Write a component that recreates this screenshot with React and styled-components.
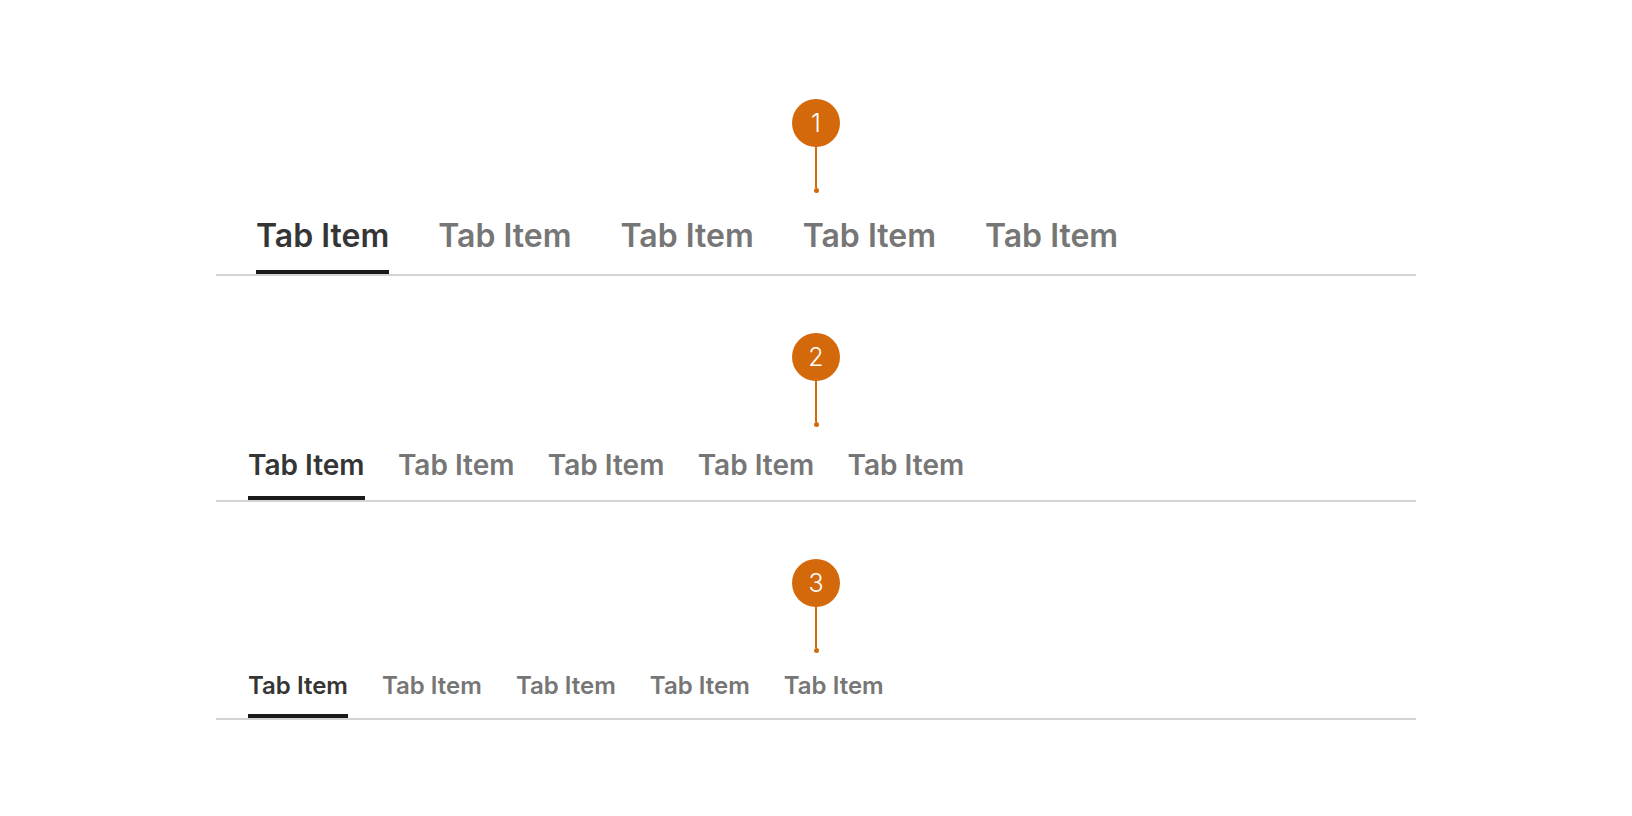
import styled, { createGlobalStyle } from "styled-components"

const GlobalStyle = createGlobalStyle`
  body {
    margin: 0;
    background: #ffffff;
    font-family: Inter, "Noto Sans", sans-serif;
  }
`

const sizes = {
  lg: { font: 32, line: 40, pad: 14, gap: 49, inset: 40, drop: 23 },
  md: { font: 28, line: 36, pad: 13, gap: 33.3, inset: 32, drop: 20 },
  sm: { font: 24, line: 32, pad: 12, gap: 34, inset: 32, drop: 17 },
}

const Page = styled.div`
  display: flex;
  flex-direction: column;
  align-items: center;
  padding-top: 99px;
  gap: 57px;
`

const Section = styled.section`
  display: flex;
  flex-direction: column;
  align-items: center;
  width: 1200px;
`

const Marker = styled.div`
  display: flex;
  flex-direction: column;
  align-items: center;
  margin-bottom: ${p => p.$drop}px;
`

const Badge = styled.div`
  width: 48px;
  height: 48px;
  border-radius: 50%;
  background: #d4690b;
  color: #ffffff;
  display: flex;
  align-items: center;
  justify-content: center;
  font-size: 25px;
  font-weight: 300;
`

const Stem = styled.div`
  width: 2px;
  height: 41px;
  background: #d4690b;
`

const Dot = styled.div`
  width: 5px;
  height: 5px;
  border-radius: 50%;
  background: #d4690b;
`

const TabBar = styled.div`
  align-self: stretch;
  display: flex;
  gap: ${p => p.$gap}px;
  padding-left: ${p => p.$inset}px;
  border-bottom: 2px solid #d4d4d4;
`

const Tab = styled.div`
  font-size: ${p => p.$font}px;
  line-height: ${p => p.$line}px;
  font-weight: 600;
  color: ${p => (p.$active ? "#353535" : "#767676")};
  padding-bottom: ${p => p.$pad}px;
  border-bottom: 4px solid ${p => (p.$active ? "#1a1a1a" : "transparent")};
  white-space: nowrap;
`

const TabGroup = ({ number, size }) => {
  const s = sizes[size]
  return (
    <Section>
      <Marker $drop={s.drop}>
        <Badge>{number}</Badge>
        <Stem />
        <Dot />
      </Marker>
      <TabBar $gap={s.gap} $inset={s.inset}>
        {[0, 1, 2, 3, 4].map(i => (
          <Tab key={i} $active={i === 0} $font={s.font} $line={s.line} $pad={s.pad}>
            Tab Item
          </Tab>
        ))}
      </TabBar>
    </Section>
  )
}

const App = () => {
  return (
    <>
      <GlobalStyle />
      <Page>
        <TabGroup number="1" size="lg" />
        <TabGroup number="2" size="md" />
        <TabGroup number="3" size="sm" />
      </Page>
    </>
  )
}

export default App
